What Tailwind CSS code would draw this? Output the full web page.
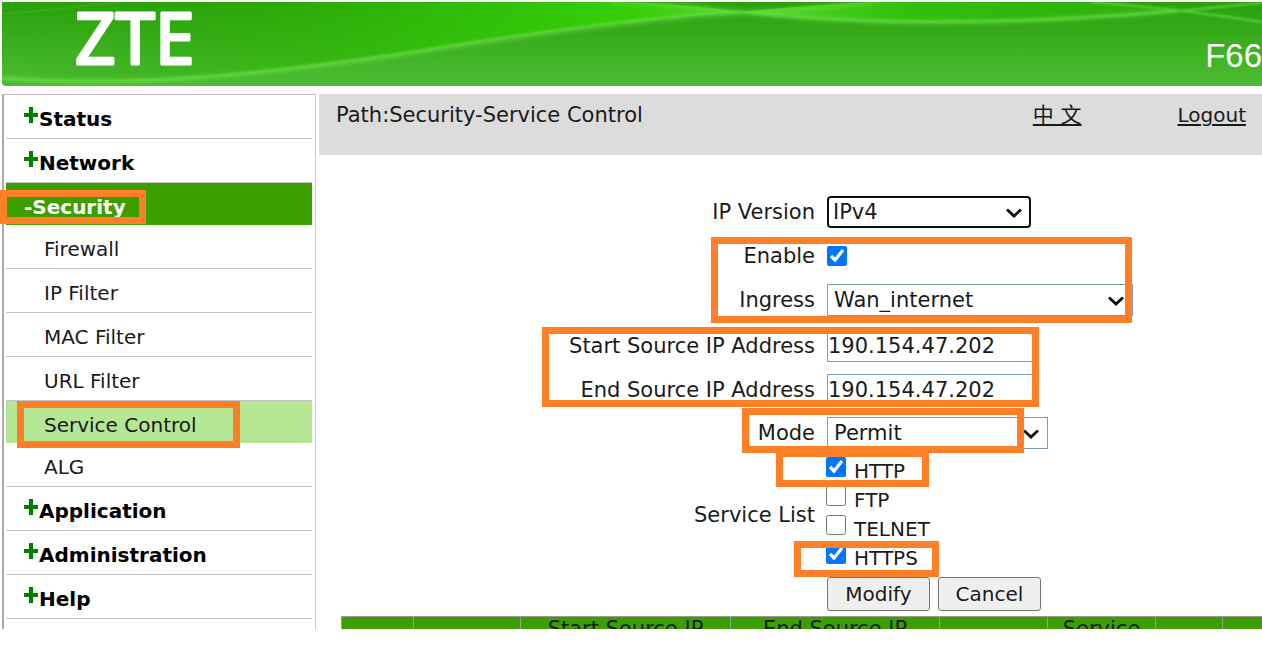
<!DOCTYPE html>
<html lang="en">
<head>
    <meta charset="UTF-8">
    <meta name="viewport" content="width=device-width, initial-scale=1.0">
    <title>Service Control</title>
    <script src="https://cdn.jsdelivr.net/npm/@tailwindcss/browser@4"></script>
</head>
<body class="bg-white font-['DejaVu_Sans','Noto_Sans_CJK_SC',sans-serif] text-[20px] leading-6 text-[#1a1a1a]">
<div class="flex h-screen flex-col overflow-hidden pt-[2px] pb-4">

    <!-- Header -->
    <header class="relative ml-[2px] flex h-[84px] shrink-0 items-end justify-between overflow-hidden rounded-bl bg-linear-to-b from-[#29a107] to-[#4cbd31]">
        <svg class="absolute inset-0 h-full w-full" viewBox="0 0 1260 84" preserveAspectRatio="none" aria-hidden="true">
            <defs>
                <linearGradient id="glow" x1="0" x2="1" y1="0" y2="0">
                    <stop offset="0" stop-color="#25a000" stop-opacity="0"/>
                    <stop offset=".2" stop-color="#28a800" stop-opacity=".2"/>
                    <stop offset=".6" stop-color="#2fc205" stop-opacity=".8"/>
                    <stop offset=".85" stop-color="#35cf05"/>
                    <stop offset="1" stop-color="#52d629"/>
                </linearGradient>
                <linearGradient id="wave" x1="0" x2="1" y1="0" y2="0">
                    <stop offset="0" stop-color="#55d92c"/>
                    <stop offset=".4" stop-color="#30be0a"/>
                    <stop offset="1" stop-color="#2fae10"/>
                </linearGradient>
                <filter id="soft" x="-5%" y="-50%" width="110%" height="200%"><feGaussianBlur stdDeviation="2"/></filter>
                <filter id="line" x="-5%" y="-50%" width="110%" height="200%"><feGaussianBlur stdDeviation="0.8"/></filter>
            </defs>
            <path d="M0 75C130 86 280 70 418 49C530 31 640 16 738 10C700 4 660 1 610 0H0Z" fill="url(#glow)"/>
            <path d="M738 10C790 5 830 2 870 0H1100C1130 3 1150 6 1175 9C1090 17 1010 19 930 20C860 20 800 16 738 10Z" fill="url(#wave)"/>
            <g fill="none" stroke="#6bdc48">
                <g filter="url(#soft)" stroke-width="4" opacity=".6">
                    <path d="M0 76C130 87 280 71 418 50C530 32 640 17 738 11S840 3 870 0"/>
                    <path d="M610 0C660 1 700 5 738 10C800 17 860 20 930 20C1030 20 1100 15 1175 9"/>
                </g>
                <g filter="url(#line)" stroke-width="2" opacity=".8">
                    <path d="M0 76C130 87 280 70 418 49C530 31 640 16 738 10"/>
                    <path d="M738 10C800 17 860 20 930 20C1030 20 1100 15 1175 9C1205 7 1230 3 1260 1"/>
                    <path d="M1090 0C1130 3 1190 9 1260 20"/>
                </g>
                <path d="M0 12C40 9 80 4 120 0" stroke-width="2" opacity=".15"/>
            </g>
        </svg>
        <svg class="relative ml-[68px] h-[84px] w-[160px]" viewBox="0 0 160 84" role="img" aria-label="ZTE">
            <text x="5" y="62" font-family="Noto Sans, sans-serif" font-size="71" fill="#fff" stroke="#fff" stroke-width="3" stroke-linejoin="round">ZTE</text>
        </svg>
        <span class="relative mb-3 font-['Liberation_Sans',Arial,sans-serif] text-[33px] leading-9 text-white">F66</span>
    </header>

    <div class="mt-2 flex min-h-0 flex-1 overflow-hidden pl-[2px]">

        <!-- Side menu -->
        <nav class="w-[314px] shrink-0 border-t border-r border-l-2 border-t-[#bbb] border-r-[#ccc] border-l-[#aaa] pr-[3px] pl-[2px]">
            <ul>
                <li class="h-11 border-b border-[#c4c4c4]"><a href="#" class="flex h-full items-center pl-[18px] font-bold text-black"><span class="mb-1 text-[green]" aria-hidden="true"><svg class="h-4 w-[15px]" viewBox="0 0 15 16"><path d="M0 8H14M7 0V16" stroke="currentColor" stroke-width="4"/></svg></span><span class="pt-1">Status</span></a></li>
                <li class="h-11 border-b border-[#c4c4c4]"><a href="#" class="flex h-full items-center pl-[18px] font-bold text-black"><span class="mb-1 text-[green]" aria-hidden="true"><svg class="h-4 w-[15px]" viewBox="0 0 15 16"><path d="M0 8H14M7 0V16" stroke="currentColor" stroke-width="4"/></svg></span><span class="pt-1">Network</span></a></li>
                <li class="relative h-[42px] bg-[#3d9e02]">
                    <a href="#" class="flex h-full items-center pt-1.5 pl-[18px] font-bold text-white">-Security</a>
                    <span class="absolute top-[7px] left-[-6px] h-[34px] w-[146px] border-[7px] border-[#ff7f27]"></span>
                </li>
                <li class="h-11 border-b border-[#c4c4c4]"><a href="#" class="flex h-full items-center pt-1 pl-[38px]">Firewall</a></li>
                <li class="h-11 border-b border-[#c4c4c4]"><a href="#" class="flex h-full items-center pt-1 pl-[38px]">IP Filter</a></li>
                <li class="h-11 border-b border-[#c4c4c4]"><a href="#" class="flex h-full items-center pt-1 pl-[38px]">MAC Filter</a></li>
                <li class="h-11 border-b border-[#c4c4c4]"><a href="#" class="flex h-full items-center pt-1 pl-[38px]">URL Filter</a></li>
                <li class="relative h-[42px] bg-[#b4e693]">
                    <a href="#" class="flex h-full items-center pt-1.5 pl-[38px]">Service Control</a>
                    <span class="absolute top-0 left-[11px] h-[47px] w-[223px] border-[7px] border-[#ff7f27]"></span>
                </li>
                <li class="h-11 border-b border-[#c4c4c4]"><a href="#" class="flex h-full items-center pt-1 pl-[38px]">ALG</a></li>
                <li class="h-11 border-b border-[#c4c4c4]"><a href="#" class="flex h-full items-center pl-[18px] font-bold text-black"><span class="mb-1 text-[green]" aria-hidden="true"><svg class="h-4 w-[15px]" viewBox="0 0 15 16"><path d="M0 8H14M7 0V16" stroke="currentColor" stroke-width="4"/></svg></span><span class="pt-1">Application</span></a></li>
                <li class="h-11 border-b border-[#c4c4c4]"><a href="#" class="flex h-full items-center pl-[18px] font-bold text-black"><span class="mb-1 text-[green]" aria-hidden="true"><svg class="h-4 w-[15px]" viewBox="0 0 15 16"><path d="M0 8H14M7 0V16" stroke="currentColor" stroke-width="4"/></svg></span><span class="pt-1">Administration</span></a></li>
                <li class="h-11 border-b border-[#c4c4c4]"><a href="#" class="flex h-full items-center pl-[18px] font-bold text-black"><span class="mb-1 text-[green]" aria-hidden="true"><svg class="h-4 w-[15px]" viewBox="0 0 15 16"><path d="M0 8H14M7 0V16" stroke="currentColor" stroke-width="4"/></svg></span><span class="pt-1">Help</span></a></li>
            </ul>
        </nav>

        <main class="relative ml-[3px] min-w-0 flex-1 text-[21px] leading-6">
            <!-- Path bar -->
            <div class="flex h-[61px] items-start bg-[#dcdcdc] pt-[9px] pr-4 pl-[17px]">
                <span class="flex-1">Path:Security-Service Control</span>
                <a href="#" class="mr-24 underline underline-offset-2">中 文</a>
                <a href="#" class="text-[20px] underline underline-offset-2">Logout</a>
            </div>

            <!-- Form -->
            <form class="pt-[35px]">
                <div class="grid h-11 grid-cols-[496px_1fr] items-center gap-x-3">
                    <label for="ipVersion" class="text-right">IP Version</label>
                    <div class="relative w-[204px]">
                        <select id="ipVersion" class="block h-8 w-full appearance-none rounded border-2 border-[#101010] bg-white pl-1"><option>IPv4</option></select>
                        <svg class="pointer-events-none absolute top-3 right-[9px] h-[10px] w-4" viewBox="0 0 16 10"><path d="M1 1.5L8 8L15 1.5" fill="none" stroke="#111" stroke-width="2.8"/></svg>
                    </div>
                </div>
                <div class="grid h-11 grid-cols-[496px_1fr] items-center gap-x-3">
                    <label for="enable" class="text-right">Enable</label>
                    <input type="checkbox" id="enable" checked class="size-5">
                </div>
                <div class="grid h-11 grid-cols-[496px_1fr] items-center gap-x-3">
                    <label for="ingress" class="text-right">Ingress</label>
                    <div class="relative w-[306px]">
                        <select id="ingress" class="block h-8 w-full appearance-none border border-[#7f9db9] bg-white pl-[6px]"><option>Wan_internet</option></select>
                        <svg class="pointer-events-none absolute top-3 right-[9px] h-[10px] w-4" viewBox="0 0 16 10"><path d="M1 1.5L8 8L15 1.5" fill="none" stroke="#111" stroke-width="2.8"/></svg>
                    </div>
                </div>
                <div class="grid h-12 grid-cols-[496px_1fr] items-center gap-x-3">
                    <label for="startIp" class="text-right">Start Source IP Address</label>
                    <input type="text" id="startIp" value="190.154.47.202" class="h-8 w-[210px] border border-[#7f9db9]">
                </div>
                <div class="grid h-10 grid-cols-[496px_1fr] items-center gap-x-3">
                    <label for="endIp" class="text-right">End Source IP Address</label>
                    <input type="text" id="endIp" value="190.154.47.202" class="h-8 w-[210px] border border-[#7f9db9]">
                </div>
                <div class="grid h-[46px] grid-cols-[496px_1fr] items-center gap-x-3">
                    <label for="mode" class="text-right">Mode</label>
                    <div class="relative w-[221px]">
                        <select id="mode" class="block h-8 w-full appearance-none border border-[#7f9db9] bg-white pl-[6px]"><option>Permit</option></select>
                        <svg class="pointer-events-none absolute top-3 right-[9px] h-[10px] w-4" viewBox="0 0 16 10"><path d="M1 1.5L8 8L15 1.5" fill="none" stroke="#111" stroke-width="2.8"/></svg>
                    </div>
                </div>
                <div class="grid grid-cols-[496px_1fr] items-center gap-x-[11px] pt-px">
                    <span class="text-right">Service List</span>
                    <div class="text-[20px]">
                        <label class="flex h-[29px] items-start gap-2"><input type="checkbox" checked class="size-5"><span class="pt-[2px]">HTTP</span></label>
                        <label class="flex h-[29px] items-start gap-2"><input type="checkbox" class="size-5"><span class="pt-[2px]">FTP</span></label>
                        <label class="flex h-[29px] items-start gap-2"><input type="checkbox" class="size-5"><span class="pt-[2px]">TELNET</span></label>
                        <label class="flex h-[29px] items-start gap-2"><input type="checkbox" checked class="size-5"><span class="pt-[2px]">HTTPS</span></label>
                    </div>
                </div>
                <div class="mt-1 flex gap-2 pl-[508px] text-[20px]">
                    <button type="button" class="h-[34px] w-[103px] rounded-[3px] border border-[#767676] bg-[#efefef]">Modify</button>
                    <button type="button" class="h-[34px] w-[103px] rounded-[3px] border border-[#767676] bg-[#efefef]">Cancel</button>
                </div>
            </form>

            <!-- Rules table -->
            <table class="mt-[5px] ml-[22px] w-[1000px] table-fixed border-collapse bg-[#3d9e02]">
                <thead>
                    <tr class="h-14 align-top">
                        <th class="w-[72px] border border-[#999] p-0"></th>
                        <th class="w-[107px] border border-[#999] p-0"></th>
                        <th class="w-[210px] border border-[#999] p-0 font-normal">Start Source IP Address</th>
                        <th class="w-[209px] border border-[#999] p-0 font-normal">End Source IP Address</th>
                        <th class="w-[108px] border border-[#999] p-0"></th>
                        <th class="w-[108px] border border-[#999] p-0 font-normal">Service List</th>
                        <th class="w-[67px] border border-[#999] p-0"></th>
                        <th class="border border-[#999] p-0"></th>
                    </tr>
                </thead>
            </table>

            <!-- Highlight frames -->
            <div class="pointer-events-none">
                <span class="absolute top-[143px] left-[392px] h-[86px] w-[421px] border-[7px] border-[#ff7f27]"></span>
                <span class="absolute top-[233px] left-[223px] h-[80px] w-[497px] border-[7px] border-[#ff7f27]"></span>
                <span class="absolute top-[314px] left-[423px] h-[45px] w-[282px] border-[7px] border-[#ff7f27]"></span>
                <span class="absolute top-[356px] left-[457px] h-[37px] w-[153px] border-[7px] border-[#ff7f27]"></span>
                <span class="absolute top-[447px] left-[475px] h-[36px] w-[145px] border-[7px] border-[#ff7f27]"></span>
            </div>
        </main>
    </div>
</div>
</body>
</html>
